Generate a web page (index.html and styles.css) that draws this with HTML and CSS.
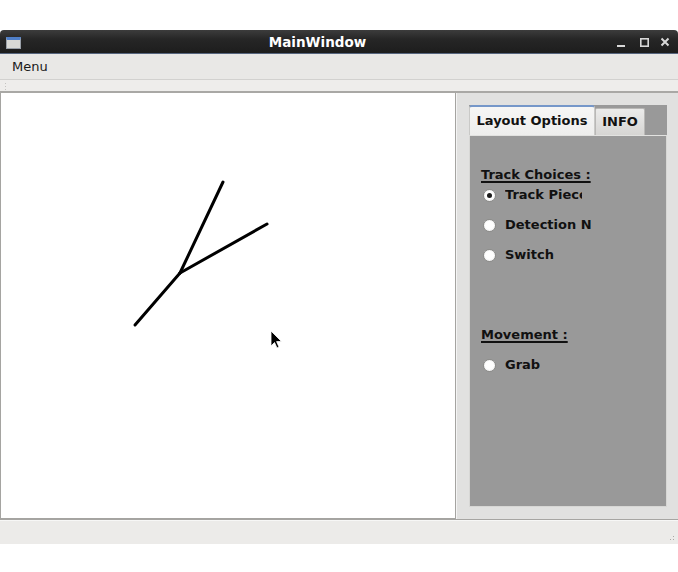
FILE: index.html
```html
<!DOCTYPE html>
<html>
<head>
<meta charset="utf-8">
<link rel="stylesheet" href="styles.css">
</head>
<body>
<div class="window">
  <div class="titlebar">
    <div class="winicon"></div>
    <div class="title">MainWindow</div>
    <div class="wbtns">
      <svg width="68" height="23" viewBox="0 0 68 23">
        <rect x="7" y="15" width="8" height="2" fill="#d8d8d8"/>
        <rect x="30.8" y="8.8" width="7.4" height="7.4" fill="none" stroke="#d8d8d8" stroke-width="1.6"/>
        <path d="M51.5 8.5 L58.5 15.5 M58.5 8.5 L51.5 15.5" stroke="#d8d8d8" stroke-width="2"/>
      </svg>
    </div>
  </div>
  <div class="menubar"><span class="menuitem">Menu</span></div>
  <div class="toolbar"><div class="grip"></div></div>
  <div class="central">
    <div class="canvas">
      <svg class="drawing" width="454" height="426" viewBox="0 93 454 426">
        <g stroke="#000" stroke-width="3" stroke-linecap="round" fill="none">
          <line x1="134" y1="325" x2="179" y2="273"/>
          <line x1="179" y1="273" x2="222" y2="182"/>
          <line x1="179" y1="273" x2="266" y2="224"/>
        </g>
        <path d="M270 331 L270 346 L273.5 342.5 L276 348 L278 347 L275.6 341.6 L280.5 341.5 Z" fill="#000" stroke="#fff" stroke-width="0.8"/>
      </svg>
    </div>
    <div class="side">
      <div class="tabwidget">
        <div class="tabbar">
          <div class="tab active">Layout Options</div>
          <div class="tab">INFO</div>
        </div>
        <div class="pane">
          <div class="group-label">Track Choices :</div>
          <div class="radio r1"><span class="dot checked"></span><span class="rlabel">Track Pieces</span></div>
          <div class="radio r2 gap"><span class="dot"></span><span class="rlabel">Detection Nodes</span></div>
          <div class="radio gap"><span class="dot"></span><span class="rlabel">Switch</span></div>
          <div class="group-label movement">Movement :</div>
          <div class="radio gap"><span class="dot"></span><span class="rlabel">Grab</span></div>
        </div>
      </div>
    </div>
  </div>
  <div class="statusbar"><div class="sizegrip"></div></div>
</div>
</body>
</html>
```
FILE: styles.css
```css
html, body {
  margin: 0;
  padding: 0;
  background: #fff;
}
body {
  padding-top: 30px;
  font-family: "DejaVu Sans", sans-serif;
}
.window {
  width: 678px;
}
.titlebar {
  height: 24px;
  background: linear-gradient(#3c3c3c, #262626 40%, #1d1d1d);
  border-radius: 4px 4px 0 0;
  border-bottom: 1px solid #56657e;
  display: flex;
  align-items: center;
  box-sizing: border-box;
}
.winicon {
  width: 13px;
  height: 8px;
  margin-left: 6px;
  margin-top: 2px;
  background: #d9d9d6;
  border: 1px solid #9aa0a8;
  border-top: 3px solid #4f7fc8;
}
.title {
  flex: 1;
  text-align: center;
  color: #fff;
  font-weight: bold;
  font-size: 13.5px;
  margin-left: 4px;
}
.wbtns {
  width: 68px;
  height: 23px;
}
.wbtns svg { display: block; }
.menubar {
  height: 25px;
  background: #e9e8e6;
  border-bottom: 1px solid #d2d1cf;
  display: flex;
  align-items: center;
}
.menuitem {
  font-size: 13px;
  color: #1a1a1a;
  margin-left: 12px;
}
.toolbar {
  background: #eeedeb;
  border-bottom: 2px solid #a9a8a5;
  padding-top: 2px;
  height: 9px;
}
.grip {
  width: 4px;
  height: 8px;
  margin-left: 4px;
  background-image: radial-gradient(circle, #c4c3c0 0.5px, transparent 0.8px);
  background-size: 3px 3px;
}
.central {
  height: 426px;
  display: flex;
  border-bottom: 1px solid #a6a5a2;
}
.canvas {
  width: 454px;
  background: #fff;
  border-left: 1px solid #a5a4a1;
  border-right: 1px solid #a5a4a1;
  border-bottom: 1px solid #a5a4a1;
}
.drawing { display: block; }
.side {
  flex: 1;
  background: #e1e1e0;
  border-left: 1px solid #f4f4f4;
  padding: 12px 11px 12px 12px;
  display: flex;
}
.tabwidget {
  flex: 1;
  background: #999999;
  display: flex;
  flex-direction: column;
}
.tabbar {
  height: 30px;
  display: flex;
  align-items: flex-end;
  background: #999999;
}
.tab {
  font-size: 13px;
  font-weight: bold;
  color: #111;
  box-sizing: border-box;
  height: 27px;
  width: 50px;
  text-align: center;
  line-height: 26px;
  background: linear-gradient(#ebebea, #d6d5d3);
  border: 1px solid #b9b8b6;
  border-bottom: none;
  border-radius: 2px 2px 0 0;
}
.tab.active {
  width: 126px;
  height: 30px;
  line-height: 27px;
  background: linear-gradient(#f6f6f5, #eeeeed);
  border-top: 2px solid #7597c9;
  border-left: 1px solid #c9c9c7;
  border-right: 1px solid #c9c9c7;
  border-radius: 3px 3px 0 0;
}
.pane {
  flex: 1;
  border: 1px solid #d7d7d5;
  border-top: 1px solid #e2e2e0;
  padding: 29px 10px 0 11px;
  display: flex;
  flex-direction: column;
  align-items: flex-start;
}
.group-label {
  font-size: 13px;
  font-weight: bold;
  color: #111;
  height: 20px;
  line-height: 20px;
  text-decoration: underline;
  text-decoration-thickness: 1.5px;
  text-underline-offset: 2px;
}
.movement {
  margin-top: 60px;
}
.radio {
  height: 20px;
  display: flex;
  align-items: center;
  font-size: 13px;
  font-weight: bold;
  color: #111;
}
.radio.gap { margin-top: 10px; }
.dot {
  width: 11px;
  height: 11px;
  margin-left: 2px;
  margin-right: 9px;
  border-radius: 50%;
  border: 1px solid #8c8c8a;
  background: radial-gradient(circle at 50% 40%, #ffffff 55%, #e8e8e8);
  box-shadow: inset 0 0 0 1px #f4f4f4;
  display: flex;
  align-items: center;
  justify-content: center;
  flex: none;
}
.dot.checked::after {
  content: "";
  width: 5px;
  height: 5px;
  border-radius: 50%;
  background: #1a1a1a;
}
.rlabel {
  white-space: nowrap;
  overflow: hidden;
  line-height: 20px;
}
.r1 .rlabel { width: 77px; }
.r2 .rlabel { width: 86px; }
.statusbar {
  height: 23px;
  background: #ecebe9;
  border-top: 1px solid #f7f7f6;
  position: relative;
}
.sizegrip {
  position: absolute;
  right: 2px;
  bottom: 2px;
  width: 10px;
  height: 10px;
  background-image: radial-gradient(circle, #a9a8a5 0.8px, transparent 1px);
  background-size: 3px 3px;
  clip-path: polygon(100% 0, 100% 100%, 0 100%);
}
```
